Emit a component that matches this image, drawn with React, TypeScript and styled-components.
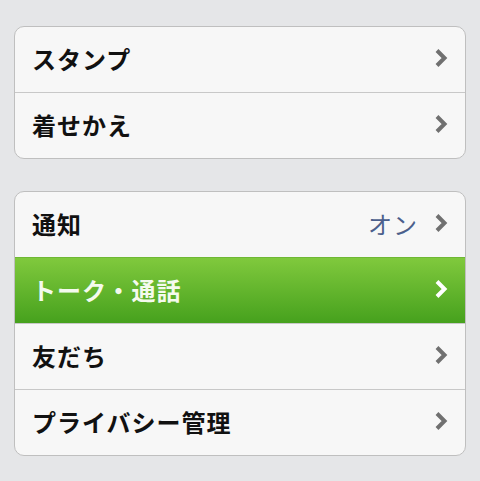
import styled, { createGlobalStyle } from "styled-components";

const GlobalStyle = createGlobalStyle`
  html, body {
    margin: 0;
    padding: 0;
    background-color: #e5e6e8;
  }
  body {
    font-family: "Noto Sans CJK JP", "Noto Sans", sans-serif;
  }
`;

const Page = styled.div`
  width: 480px;
  height: 481px;
  padding: 26px 14px 0;
  box-sizing: border-box;
  display: flex;
  flex-direction: column;
  gap: 32px;
  overflow: hidden;
`;

const Group = styled.div`
  background-color: #f7f7f7;
  border: 1px solid #bfbfbf;
  border-radius: 10px;
  overflow: hidden;
`;

const Row = styled.div<{ $active?: boolean }>`
  height: 66px;
  display: flex;
  align-items: center;
  padding: 0 17px 3px 17px;
  box-sizing: border-box;
  border-top: 1px solid ${(p) => (p.$active ? "#6fb834" : "#c8c8c8")};
  background: ${(p) =>
    p.$active ? "linear-gradient(to bottom, #80c93d, #46a11d)" : "transparent"};
  color: ${(p) => (p.$active ? "#f4faee" : "#111")};

  &:first-child {
    border-top: none;
    height: 65px;
  }
`;

const Label = styled.span`
  flex: 1;
  font-size: 24px;
  font-weight: 700;
  letter-spacing: 1px;
`;

const Value = styled.span`
  font-size: 24px;
  font-weight: 400;
  color: #4b5f8c;
  margin-right: 16px;
  letter-spacing: 1px;
`;

const Chevron = ({ color }: { color: string }) => (
  <svg width="14" height="20" viewBox="0 0 14 20">
    <path
      d="M3 2.5 L10.5 10 L3 17.5"
      fill="none"
      stroke={color}
      strokeWidth="4"
      strokeLinejoin="miter"
    />
  </svg>
);

type Item = { label: string; value?: string; active?: boolean };

const groups: Item[][] = [
  [{ label: "スタンプ" }, { label: "着せかえ" }],
  [
    { label: "通知", value: "オン" },
    { label: "トーク・通話", active: true },
    { label: "友だち" },
    { label: "プライバシー管理" },
  ],
];

const App = () => (
  <>
    <GlobalStyle />
    <Page>
      {groups.map((items, i) => (
        <Group key={i}>
          {items.map((item) => (
            <Row key={item.label} $active={item.active}>
              <Label>{item.label}</Label>
              {item.value && <Value>{item.value}</Value>}
              <Chevron color={item.active ? "#ffffff" : "#707070"} />
            </Row>
          ))}
        </Group>
      ))}
    </Page>
  </>
);

export default App;
